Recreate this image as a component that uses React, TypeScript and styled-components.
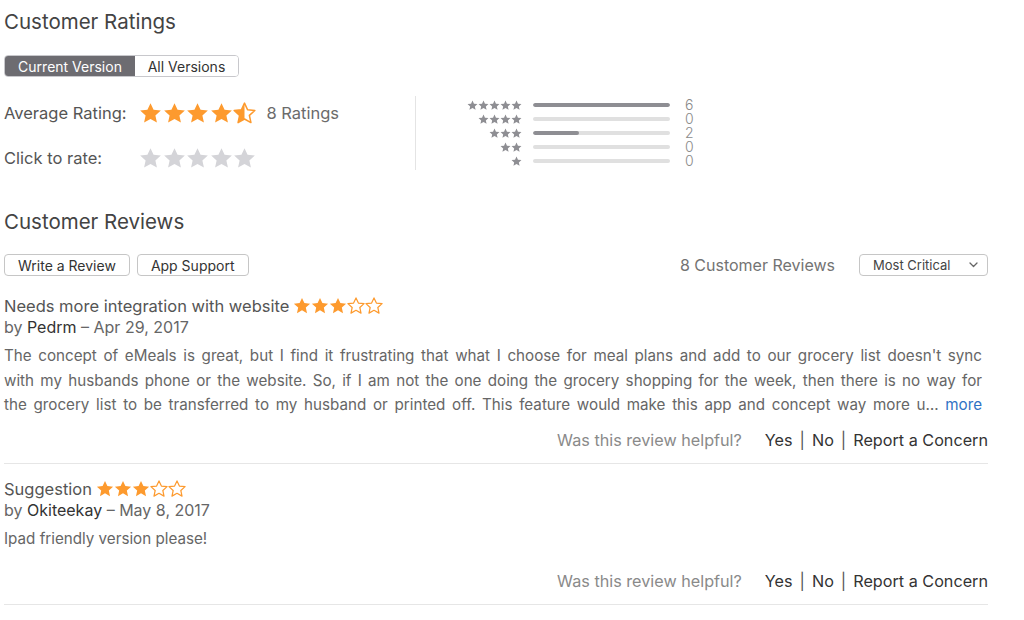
import React from 'react';
import styled, { createGlobalStyle } from 'styled-components';

const GlobalStyle = createGlobalStyle`
  html, body {
    margin: 0;
    padding: 0;
    background: #ffffff;
  }
  body {
    font-family: 'Inter', 'Liberation Sans', sans-serif;
    -webkit-font-smoothing: antialiased;
  }
`;

const ORANGE = '#fd9a2e';
const STAR_POINTS =
  '12,1.2 15.2,8.1 22.8,8.9 17.1,14 18.7,21.5 12,17.7 5.3,21.5 6.9,14 1.2,8.9 8.8,8.1';

type StarKind = 'full' | 'half' | 'empty';

const Star = ({ kind, size, color, id }: { kind: StarKind; size: number; color: string; id?: string }) => (
  <svg width={size} height={size} viewBox="0 0 24 24">
    {kind === 'half' && (
      <defs>
        <clipPath id={id}>
          <rect x="0" y="0" width="12" height="24" />
        </clipPath>
      </defs>
    )}
    {kind === 'full' && <polygon points={STAR_POINTS} fill={color} />}
    {kind === 'half' && (
      <>
        <polygon points={STAR_POINTS} fill="none" stroke={color} strokeWidth="1.6" strokeLinejoin="round" />
        <polygon points={STAR_POINTS} fill={color} clipPath={`url(#${id})`} />
      </>
    )}
    {kind === 'empty' && (
      <polygon points={STAR_POINTS} fill="none" stroke={color} strokeWidth="1.6" strokeLinejoin="round" />
    )}
  </svg>
);

const starKinds = (rating: number): StarKind[] =>
  [0, 1, 2, 3, 4].map((i) => (rating >= i + 1 ? 'full' : rating >= i + 0.5 ? 'half' : 'empty'));

const histogram = [
  { stars: 5, count: 6 },
  { stars: 4, count: 0 },
  { stars: 3, count: 2 },
  { stars: 2, count: 0 },
  { stars: 1, count: 0 },
];

// the preview is clamped to three lines, so the lines are kept as shown
const reviews = [
  {
    id: 1,
    title: 'Needs more integration with website',
    rating: 3,
    author: 'Pedrm',
    date: 'Apr 29, 2017',
    lines: [
      "The concept of eMeals is great, but I find it frustrating that what I choose for meal plans and add to our grocery list doesn't sync",
      'with my husbands phone or the website. So, if I am not the one doing the grocery shopping for the week, then there is no way for',
      'the grocery list to be transferred to my husband or printed off. This feature would make this app and concept way more u…',
    ],
    more: true,
    space: 12,
  },
  {
    id: 2,
    title: 'Suggestion',
    rating: 3,
    author: 'Okiteekay',
    date: 'May 8, 2017',
    lines: ['Ipad friendly version please!'],
    more: false,
    space: 20,
  },
];

const App = () => {
  const maxCount = Math.max(...histogram.map((h) => h.count));
  return (
    <Page>
      <GlobalStyle />
      <SectionTitle>Customer Ratings</SectionTitle>
      <Segmented>
        <Segment active>Current Version</Segment>
        <Segment>All Versions</Segment>
      </Segmented>

      <RatingsArea>
        <RatingsLeft>
          <RatingRow>
            <RatingLabel>Average Rating:</RatingLabel>
            <StarRow>
              {starKinds(4.5).map((k, i) => (
                <Star key={i} kind={k} size={23} color={ORANGE} id={`avg-${i}`} />
              ))}
            </StarRow>
            <RatingCount>8 Ratings</RatingCount>
          </RatingRow>
          <RatingRow>
            <RatingLabel>Click to rate:</RatingLabel>
            <StarRow>
              {[0, 1, 2, 3, 4].map((i) => (
                <Star key={i} kind="full" size={23} color="#d4d4d8" />
              ))}
            </StarRow>
          </RatingRow>
        </RatingsLeft>
        <Histogram>
          {histogram.map(({ stars, count }) => (
            <HistRow key={stars}>
              <HistStars>
                {Array.from({ length: stars }).map((_, i) => (
                  <Star key={i} kind="full" size={11} color="#8e8e93" />
                ))}
              </HistStars>
              <BarTrack>
                <BarFill style={{ width: `${(count / maxCount) * 100}%` }} />
              </BarTrack>
              <HistCount>{count}</HistCount>
            </HistRow>
          ))}
        </Histogram>
      </RatingsArea>

      <ReviewsTitle>Customer Reviews</ReviewsTitle>
      <Toolbar>
        <ButtonGroup>
          <PlainButton>Write a Review</PlainButton>
          <PlainButton>App Support</PlainButton>
        </ButtonGroup>
        <ToolbarRight>
          <ReviewTotal>8 Customer Reviews</ReviewTotal>
          <SortSelect>
            <span>Most Critical</span>
            <svg width="9" height="6" viewBox="0 0 9 6">
              <path d="M1 1 L4.5 4.5 L8 1" fill="none" stroke="#666" strokeWidth="1.3" strokeLinecap="round" strokeLinejoin="round" />
            </svg>
          </SortSelect>
        </ToolbarRight>
      </Toolbar>

      {reviews.map((r) => (
        <Review key={r.id}>
          <ReviewTitle>
            {r.title}
            <InlineStars>
              {starKinds(r.rating).map((k, i) => (
                <Star key={i} kind={k} size={18} color={ORANGE} />
              ))}
            </InlineStars>
          </ReviewTitle>
          <Byline>
            by <Author>{r.author}</Author> – {r.date}
          </Byline>
          <Body>
            {r.lines.map((line, i) => {
              const last = i === r.lines.length - 1;
              return (
                <Line key={i} full={!last || r.more}>
                  {line}
                  {last && r.more && <MoreLink> more</MoreLink>}
                </Line>
              );
            })}
          </Body>
          <Helpful space={r.space}>
            <HelpfulQuestion>Was this review helpful?</HelpfulQuestion>
            <HelpfulLinks>
              Yes<Sep>|</Sep>No<Sep>|</Sep>Report a Concern
            </HelpfulLinks>
          </Helpful>
        </Review>
      ))}
    </Page>
  );
};

const Page = styled.div`
  width: 984px;
  padding: 10px 0 0 4px;
  color: #444;
`;

const SectionTitle = styled.h2`
  margin: 0;
  font-size: 20.5px;
  font-weight: 400;
  line-height: 24px;
  color: #434343;
`;

const ReviewsTitle = styled(SectionTitle)`
  margin-top: 35px;
`;

const Segmented = styled.div`
  display: inline-flex;
  margin-top: 21px;
  border: 1px solid #c8c8cc;
  border-radius: 4px;
  overflow: hidden;
`;

const Segment = styled.div<{ active?: boolean }>`
  height: 20px;
  display: flex;
  align-items: center;
  justify-content: center;
  width: ${(p) => (p.active ? '130px' : '103px')};
  font-size: 14px;
  color: ${(p) => (p.active ? '#ffffff' : '#333')};
  background: ${(p) => (p.active ? '#6d6c71' : '#ffffff')};
`;

const RatingsArea = styled.div`
  display: flex;
  align-items: flex-start;
  margin-top: 19px;
`;

const RatingsLeft = styled.div`
  width: 411px;
  display: flex;
  flex-direction: column;
  gap: 11px;
`;

const RatingRow = styled.div`
  height: 34px;
  display: flex;
  align-items: center;
`;

const RatingLabel = styled.span`
  width: 135px;
  font-size: 16.5px;
  color: #555;
`;

const StarRow = styled.div`
  display: flex;
  gap: 0.6px;
`;

const RatingCount = styled.span`
  margin-left: 10px;
  font-size: 16.5px;
  color: #6b6b6b;
`;

const Histogram = styled.div`
  height: 74px;
  border-left: 1px solid #e4e4e4;
  padding-top: 2px;
  box-sizing: border-box;
`;

const HistRow = styled.div`
  height: 14px;
  display: flex;
  align-items: center;
`;

const HistStars = styled.div`
  width: 106px;
  display: flex;
  justify-content: flex-end;
`;

const BarTrack = styled.div`
  width: 137px;
  height: 4px;
  margin-left: 11px;
  border-radius: 2px;
  background: #e0e0e0;
  overflow: hidden;
`;

const BarFill = styled.div`
  height: 100%;
  background: #8e8e93;
  border-radius: 2px;
`;

const HistCount = styled.span`
  margin-left: 15px;
  font-size: 14px;
  line-height: 14px;
  font-weight: 300;
  color: #8a8a8a;
`;

const Toolbar = styled.div`
  display: flex;
  justify-content: space-between;
  align-items: center;
  margin-top: 20px;
`;

const ButtonGroup = styled.div`
  display: flex;
  gap: 7px;
`;

const PlainButton = styled.button`
  height: 22px;
  padding: 0 13px;
  font-family: inherit;
  font-size: 14px;
  color: #333;
  background: #ffffff;
  border: 1px solid #c6c6c6;
  border-radius: 4px;
`;

const ToolbarRight = styled.div`
  display: flex;
  align-items: center;
  gap: 24px;
`;

const ReviewTotal = styled.span`
  font-size: 16px;
  color: #737373;
`;

const SortSelect = styled.div`
  width: 129px;
  height: 22px;
  box-sizing: border-box;
  display: flex;
  align-items: center;
  justify-content: space-between;
  padding: 0 9px 0 13px;
  font-size: 13px;
  color: #444;
  border: 1px solid #c6c6c6;
  border-radius: 4px;
`;

const Review = styled.div`
  padding-top: 20px;
  border-bottom: 1px solid #e6e6e6;
  & + & {
    padding-top: 15px;
  }
`;

const ReviewTitle = styled.div`
  display: flex;
  align-items: center;
  height: 20px;
  font-size: 16.5px;
  color: #555;
`;

const InlineStars = styled.span`
  display: inline-flex;
  margin-left: 4px;
`;

const Byline = styled.div`
  height: 20px;
  line-height: 20px;
  margin-top: 1px;
  font-size: 16px;
  color: #666;
`;

const Author = styled.span`
  color: #333;
`;

const Body = styled.div`
  width: 978px;
  margin-top: 7px;
  font-size: 15.2px;
  line-height: 24.5px;
  color: #666;
`;

const Line = styled.span<{ full: boolean }>`
  display: block;
  text-align: ${(p) => (p.full ? 'justify' : 'left')};
  text-align-last: ${(p) => (p.full ? 'justify' : 'left')};
`;

const MoreLink = styled.a`
  color: #2f72c4;
  cursor: pointer;
`;

const Helpful = styled.div<{ space: number }>`
  display: flex;
  justify-content: flex-end;
  align-items: center;
  gap: 23px;
  height: 20px;
  margin: ${(p) => p.space}px 0 13px;
  font-size: 16.2px;
`;

const HelpfulQuestion = styled.span`
  color: #8a8a8a;
`;

const HelpfulLinks = styled.span`
  color: #333;
`;

const Sep = styled.span`
  margin: 0 7px;
  color: #555;
`;

export default App;
